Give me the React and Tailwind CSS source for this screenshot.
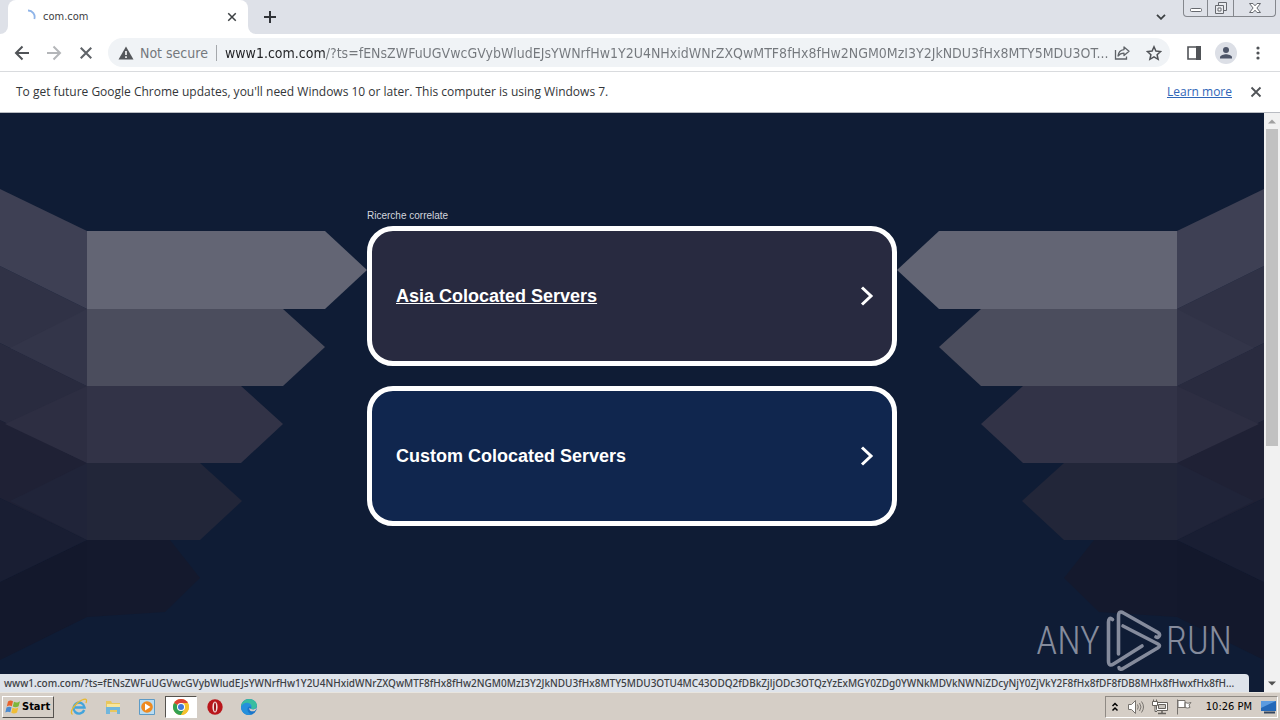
import React from "react";

const HOST = "www1.com.com";
const QUERY = "/?ts=fENsZWFuUGVwcGVybWludEJsYWNrfHw1Y2U4NHxidWNrZXQwMTF8fHx8fHw2NGM0MzI3Y2JkNDU3fHx8MTY5MDU3OT";
const QUERY_REST = "U4MC43ODQ2fDBkZjljODc3OTQzYzExMGY0ZDg0YWNkMDVkNWNiZDcyNjY0ZjVkY2F8fHx8fDF8fDB8MHx8fHwxfHx8fH";

function Cross({ className }) {
  return (
    <svg className={className} viewBox="0 0 12 12" fill="none" stroke="currentColor" strokeWidth="1.8" aria-hidden="true">
      <path d="M1.5 1.5 10.5 10.5M10.5 1.5 1.5 10.5" />
    </svg>
  );
}

function TabStrip() {
  return (
    <header className="flex h-[34px] items-end bg-[#dee1e8]">
      <div className="flex w-2 self-stretch items-end bg-white">
        <div className="h-full w-full rounded-br-lg bg-[#dee1e8]" />
      </div>
      <div className="flex h-full w-60 items-center rounded-t-lg bg-white pl-3 pr-2">
        <svg className="h-4 w-4" viewBox="0 0 16 16" fill="none" aria-hidden="true">
          <path d="M8 1.5A6.5 6.5 0 0 1 14.3 10" stroke="#8fb4e8" strokeWidth="1.8" />
        </svg>
        <span className="ml-[7px] flex-1 font-['DejaVu_Sans_Condensed',sans-serif] text-[11px] leading-4 text-[#3c4043]">com.com</span>
        <button type="button" aria-label="Close tab" className="flex h-4 w-4 items-center justify-center text-[#3c4043]">
          <Cross className="h-[10px] w-[10px]" />
        </button>
      </div>
      <div className="flex w-2 self-stretch bg-white">
        <div className="h-full w-full rounded-bl-lg bg-[#dee1e8]" />
      </div>
      <button type="button" aria-label="New tab" className="flex h-full w-7 items-center justify-center text-[#303338]">
        <svg className="h-3 w-3" viewBox="0 0 12 12" stroke="currentColor" strokeWidth="2" aria-hidden="true">
          <path d="M6 0v12M0 6h12" />
        </svg>
      </button>
      <div className="flex-1" />
      <button type="button" aria-label="Search tabs" className="mr-[14px] flex h-full w-4 items-center justify-center text-[#3c4043]">
        <svg className="h-[6px] w-[10px]" viewBox="0 0 10 6" fill="none" stroke="currentColor" strokeWidth="1.8" aria-hidden="true">
          <path d="m1 .8 4 4 4-4" />
        </svg>
      </button>
      <div className="mr-1 flex h-[17px] self-start rounded-b border border-t-0 border-[#84878d] text-[#66696f]">
        <button type="button" aria-label="Minimize" className="flex w-6 items-center justify-center border-r border-[#84878d]">
          <svg className="h-4 w-4" viewBox="0 0 16 16" fill="#fff" stroke="currentColor" aria-hidden="true">
            <rect x="2.5" y="8.5" width="11" height="3" rx="1" />
          </svg>
        </button>
        <button type="button" aria-label="Restore" className="flex w-[26px] items-center justify-center border-r border-[#84878d]">
          <svg className="h-4 w-4" viewBox="0 0 16 16" fill="#e8eaee" stroke="currentColor" aria-hidden="true">
            <path d="M5.5 2.5h8v8h-8z" />
            <path d="M2.500 5.500h8v8h-8z" />
            <path d="M5 8h3v3H5z" fill="#fff" />
          </svg>
        </button>
        <button type="button" aria-label="Close window" className="flex w-[41px] items-center justify-center">
          <svg className="h-4 w-4" viewBox="0 0 16 16" fill="#fff" stroke="currentColor" aria-hidden="true">
            <path d="M2.500 3.500h3.500l2 2.300 2-2.300h3.500l-3.600 4.500 3.600 4.500h-3.500l-2-2.300-2 2.300h-3.500l3.600-4.500z" />
          </svg>
        </button>
      </div>
    </header>
  );
}

function Toolbar() {
  const button = "flex h-8 w-8 shrink-0 items-center justify-center text-[#5f6368]";
  return (
    <nav className="flex h-[37px] items-center bg-white pl-[6px] pr-[6px]">
      <button type="button" aria-label="Back" className={button}>
        <svg className="h-4 w-4" viewBox="0 0 16 16" fill="none" stroke="#505357" strokeWidth="2" aria-hidden="true">
          <path d="M15 8H2.500M8.500 1.500 2 8l6.500 6.500" />
        </svg>
      </button>
      <button type="button" aria-label="Forward" disabled className={button}>
        <svg className="h-4 w-4" viewBox="0 0 16 16" fill="none" stroke="#b4b6b9" strokeWidth="2" aria-hidden="true">
          <path d="M1 8h12.500M7.500 1.500 14 8l-6.500 6.500" />
        </svg>
      </button>
      <button type="button" aria-label="Stop loading" className={button}>
        <Cross className="h-[14px] w-[14px]" />
      </button>
      <div className="ml-[6px] flex h-[29px] min-w-0 flex-1 items-center rounded-full bg-[#f0f3f6] pl-[10px] font-['DejaVu_Sans_Condensed','DejaVu_Sans',sans-serif]">
        <svg className="h-4 w-4 shrink-0" viewBox="0 0 16 16" aria-hidden="true">
          <path d="M8 1.500 15.500 14.500H.5z" fill="#55585c" />
          <path d="M8 6v4M8 11.300v1.700" stroke="#fff" strokeWidth="1.600" />
        </svg>
        <span className="ml-[6px] w-[68px] shrink-0 whitespace-nowrap text-[14px] leading-5 text-[#74787d]">Not secure</span>
        <span className="ml-2 h-4 w-px shrink-0 bg-[#a5a8ac]" />
        <input
          type="text"
          aria-label="Address and search bar"
          defaultValue={HOST + QUERY + "..."}
          className="ml-2 h-6 min-w-0 flex-1 bg-linear-to-r from-[#202124] from-[100px] to-[#74787d] to-[100px] bg-clip-text text-[14px] leading-5 text-transparent outline-none"
        />
        <button type="button" aria-label="Share this page" className="flex h-7 w-7 shrink-0 items-center justify-start pl-1 text-[#5f6368]">
          <svg className="h-4 w-4" viewBox="0 0 16 16" fill="none" stroke="currentColor" strokeWidth="1.300" aria-hidden="true">
            <path d="M1.500 5v9h11v-2.500" />
            <path d="M10 2l5 4.300-5 4.300V8.200C7.300 8.200 5.500 9 4 11c.4-3.700 2.500-6 6-6.400z" strokeLinejoin="round" />
          </svg>
        </button>
        <button type="button" aria-label="Bookmark this tab" className="flex h-7 w-8 shrink-0 items-center justify-center text-[#505357]">
          <svg className="h-4 w-4" viewBox="0 0 16 16" fill="none" stroke="currentColor" strokeWidth="1.500" aria-hidden="true">
            <path d="m8 1.800 1.900 4.300 4.700.5-3.500 3.100 1 4.600L8 11.900l-4.100 2.400 1-4.600L1.400 6.600l4.700-.5z" />
          </svg>
        </button>
      </div>
      <button type="button" aria-label="Side panel" className="ml-2 flex h-8 w-8 shrink-0 items-center justify-center">
        <svg className="h-[14px] w-[14px]" viewBox="0 0 14 14" aria-hidden="true">
          <path d="M1 1h12v12H1z" fill="#fff" stroke="#505357" strokeWidth="1.600" />
          <path d="M9 0h5v14H9z" fill="#505357" />
        </svg>
      </button>
      <button type="button" aria-label="Profile" className="flex h-8 w-8 shrink-0 items-center justify-center">
        <svg className="h-[22px] w-[22px]" viewBox="0 0 22 22" aria-hidden="true">
          <circle cx="11" cy="11" r="11" fill="#dcdfe6" />
          <circle cx="11" cy="8" r="3" fill="#4d5568" />
          <path d="M5 16.500v-1.200c0-2 4-3 6-3s6 1 6 3v1.200z" fill="#4d5568" />
        </svg>
      </button>
      <button type="button" aria-label="Menu" className="flex h-8 w-8 shrink-0 items-center justify-center">
        <svg className="h-4 w-4" viewBox="0 0 16 16" fill="#505357" aria-hidden="true">
          <circle cx="8" cy="3" r="1.600" />
          <circle cx="8" cy="8" r="1.600" />
          <circle cx="8" cy="13" r="1.600" />
        </svg>
      </button>
    </nav>
  );
}

function UpdateNotice() {
  return (
    <section className="flex h-[42px] items-center border-y border-t-[#d9dbde] border-b-[#b9bcc2] bg-white pl-4 pr-[18px] text-[12px] leading-4 text-[#333639]">
      <p className="flex-1">
        To get future Google Chrome updates, you'll need Windows 10 or later. This computer is using Windows 7.
      </p>
      <a href="#learn" className="text-[#2f66b8] underline">Learn more</a>
      <button type="button" aria-label="Dismiss" className="ml-[18px] flex h-3 w-3 items-center justify-center text-[#505357]">
        <Cross className="h-3 w-3" />
      </button>
    </section>
  );
}

function Ribbons({ className }) {
  return (
    <svg className={className} width="367" height="578" viewBox="0 113 367 578" aria-hidden="true">
      <path d="M0 582 87 540V617L0 660z" fill="#13182c" />
      <path d="M87 540H170L200 578 165 612 87 617z" fill="#14192d" />
      <path d="M0 498 87 540 0 582z" fill="#191e33" />
      <path d="M0 420 87 463V540L0 498z" fill="#1f2135" />
      <path d="M0 343 87 386V463L0 420z" fill="#292b3f" />
      <path d="M0 266 87 309V386L0 343z" fill="#303246" />
      <path d="M0 189 87 231V309L0 266z" fill="#3e4054" />
      <path d="M87 309V386L10 348z" fill="#333549" />
      <path d="M87 386V463L5 424z" fill="#2d2e42" />
      <path d="M87 463V540L10 501z" fill="#202439" />
      <path d="M87 463H200L242 501 200 540H87z" fill="#222639" />
      <path d="M87 386H241L283 424 241 463H87z" fill="#323347" />
      <path d="M87 309H283L325 347 283 386H87z" fill="#4b4d5d" />
      <path d="M87 231H325L367 270 325 309H87z" fill="#636574" />
    </svg>
  );
}

function ResultCard({ title, active }) {
  return (
    <a
      href="#result"
      className={
        "flex h-[140px] items-center justify-between rounded-[26px] border-[5px] border-white pl-6 pr-[18px] text-white " +
        (active ? "bg-[#282a40]" : "bg-[#10264e]")
      }
    >
      <span className={"text-[18px] font-bold leading-6 " + (active ? "underline" : "")}>{title}</span>
      <svg className="h-5 w-[14px]" viewBox="0 0 14 20" fill="none" stroke="#fff" strokeWidth="3" aria-hidden="true">
        <path d="m2 1.500 9 8.500L2 18.500" />
      </svg>
    </a>
  );
}

function Watermark() {
  const word = "font-['Roboto_Condensed','Roboto',sans-serif] text-[38px] font-light leading-[60px]";
  return (
    <div className="absolute bottom-5 right-8 flex items-center text-[#858b9c]">
      <span className={word}>ANY</span>
      <svg className="ml-[6px] mr-1 h-[62px] w-14" viewBox="0 0 56 62" fill="none" stroke="#858b9c" strokeWidth="3.600" strokeLinejoin="round" strokeLinecap="round" aria-hidden="true">
        <path d="M6.500 9.500C4 7 2.500 9 2.500 12V51c0 4 2 5 5 3L36 36" />
        <path d="M12.500 44V6c0-4 2-5 5-3L52 22.500c3 2 1 6-2 4.500" />
        <path d="M17 16 52 34c2 1.200 2 2.500 0 3.800L17 58.500c-2 1.500-4 .5-4-1" />
      </svg>
      <span className={word}>RUN</span>
    </div>
  );
}

function Scrollbar() {
  return (
    <div className="flex w-4 shrink-0 flex-col items-center bg-[#f1f1f1]" aria-hidden="true">
      <svg className="h-4 w-4 shrink-0" viewBox="0 0 16 16"><path d="M4 10.500 8 6.500l4 4z" fill="#a0a0a0" /></svg>
      <div className="min-h-0 w-full flex-1 px-[2px]">
        <div className="h-[58%] bg-[#c1c1c1]" />
      </div>
      <svg className="h-4 w-4 shrink-0" viewBox="0 0 16 16"><path d="M4 5.500 8 9.500l4-4z" fill="#505050" /></svg>
    </div>
  );
}

function PageView() {
  return (
    <div className="flex min-h-0 flex-1">
      <main className="relative min-w-0 flex-1 overflow-hidden bg-[#0f1c35] font-['Liberation_Sans',sans-serif]">
        <Ribbons className="absolute left-0 top-0" />
        <Ribbons className="absolute right-0 top-0 -scale-x-100" />
        <div className="relative mx-auto flex w-[530px] flex-col pt-[97px]">
          <h1 className="mb-1 text-[10px] leading-3 text-[#d3d6de]">Ricerche correlate</h1>
          <div className="flex flex-col gap-5">
            <ResultCard title="Asia Colocated Servers" active />
            <ResultCard title="Custom Colocated Servers" />
          </div>
        </div>
        <Watermark />
        <div className="absolute bottom-0 left-0 right-[15px] h-[18px] overflow-hidden whitespace-nowrap rounded-tr bg-[#dee3ea] pl-1 font-['Noto_Sans',sans-serif] text-[10px] font-medium leading-[18px] text-[#3c4043]">
          {HOST + QUERY + QUERY_REST + "..."}
        </div>
      </main>
      <Scrollbar />
    </div>
  );
}

function StartFlag() {
  return (
    <svg className="h-4 w-4" viewBox="0 0 16 16" aria-hidden="true">
      <path d="M3 2.500c2-1.500 3.500-1 5-.2L6.800 7.200c-1.600-.8-3-.9-5 .2z" fill="#e8622c" />
      <path d="M9 2.800c2 1 3.600 1 6-.5l-1.400 5c-2 1.300-4 1.200-5.800.3z" fill="#7db63c" />
      <path d="M1.500 8.500c2-1.200 3.500-1 5-.2l-1.200 5c-1.600-.8-3-1-5 .2z" fill="#4a8ad0" />
      <path d="M7.500 8.700c2 1 3.700 1 5.800-.3l-1.300 5c-2 1.300-4 1.200-5.700.3z" fill="#f0bd35" />
    </svg>
  );
}

function Taskbar() {
  const app = "flex h-[22px] w-8 items-center justify-center";
  return (
    <footer className="flex h-[28px] shrink-0 items-center border-t border-[#e8e5df] bg-[#d5cec6] pl-[2px] pr-[2px] font-['DejaVu_Sans_Condensed','DejaVu_Sans',sans-serif]">
      <button type="button" className="flex h-[22px] w-[52px] items-center gap-px border border-b-[#55524e] border-l-white border-r-[#55524e] border-t-white pl-[2px] text-[11px] font-bold leading-4 text-black">
        <StartFlag />
        Start
      </button>
      <div className="ml-[9px] flex flex-1 items-center gap-[2px]">
        <button type="button" aria-label="Internet Explorer" className={app}>
          <svg className="h-[18px] w-[18px]" viewBox="0 0 18 18" fill="none" aria-hidden="true">
            <path d="M14.200 12A5.500 5.500 0 1 1 14.500 9.500H5" stroke="#42a4dc" strokeWidth="2.400" />
            <path d="M2.500 16.500C-1 14 5 5 12 2c5-2 5 0 4 3" stroke="#e8b92e" strokeWidth="1.300" />
          </svg>
        </button>
        <button type="button" aria-label="Windows Explorer" className={app}>
          <svg className="h-4 w-4" viewBox="0 0 16 16" aria-hidden="true">
            <path d="M1 2h5l1 2h8v9H1z" fill="#e8c75e" />
            <path d="M2 5h13v5H2z" fill="#f8e69b" />
            <path d="M1 8h14v7h-3v-4H5v4H1z" fill="#70b6dc" />
          </svg>
        </button>
        <button type="button" aria-label="Media Player" className={app}>
          <svg className="h-4 w-4" viewBox="0 0 16 16" aria-hidden="true">
            <path d="M.5.5h15v15H.5z" fill="#b9dcf2" stroke="#5d9bc6" />
            <circle cx="8" cy="8" r="5.800" fill="#ee8a20" />
            <path d="m6 4.500 5.500 3.500L6 11.500z" fill="#fff" />
          </svg>
        </button>
        <button type="button" aria-label="Google Chrome" className="flex h-[22px] w-8 items-center justify-center border border-b-white border-l-[#55524e] border-r-white border-t-[#55524e] bg-white">
          <svg className="h-4 w-4" viewBox="0 0 16 16" aria-hidden="true">
            <circle cx="8" cy="8" r="8" fill="#f5c12e" />
            <path d="M8 8 1.070 4A8 8 0 0 1 14.930 4z" fill="#dc4335" />
            <path d="M8 8 1.070 4A8 8 0 0 0 8 16l3.460-6z" fill="#33a152" />
            <path d="M8 4h6.930A8 8 0 0 1 8 16l3.460-6z" fill="#f5c12e" />
            <circle cx="8" cy="8" r="4" fill="#fff" />
            <circle cx="8" cy="8" r="3" fill="#4079da" />
          </svg>
        </button>
        <button type="button" aria-label="Opera" className={app}>
          <svg className="h-4 w-4" viewBox="0 0 16 16" aria-hidden="true">
            <circle cx="8" cy="8" r="7.700" fill="#b9161b" />
            <ellipse cx="8" cy="8" rx="2.600" ry="5.500" fill="#f3dedd" />
            <ellipse cx="8" cy="8" rx="1" ry="4.500" fill="#9a1015" />
          </svg>
        </button>
        <button type="button" aria-label="Microsoft Edge" className={app}>
          <svg className="h-4 w-4" viewBox="0 0 16 16" aria-hidden="true">
            <circle cx="8" cy="8" r="8" fill="#1b75c9" />
            <path d="M0 8C0 3 4 0 8 0c5 0 8 3.500 8 6.500 0 3-3 4-6 3.500C11 7 9 5 6 5 3 5 1 6.500 0 8z" fill="#39bda0" />
            <path d="M0 8c1-3 4-4.500 6.500-4.300C9 4 11 6 10.500 8.500 9 6.500 6 8 6.500 11c.5 2.500 2.500 4.500 5 4C5 18 0 13 0 8z" fill="#2590dc" />
            <path d="M10 10c3 1 5 0 6-2-.5 3-2 4-4 4.300-2 .2-4-1-3.700-3.300z" fill="#d5cec6" />
          </svg>
        </button>
      </div>
      <div className="flex h-[22px] items-center border border-b-white border-l-[#8f8a84] border-r-white border-t-[#8f8a84] pl-[5px] text-black">
        <button type="button" aria-label="Show hidden icons" className="flex h-4 w-2 items-center justify-center">
          <svg className="h-[10px] w-2" viewBox="0 0 8 10" fill="none" stroke="#000" strokeWidth="1.500" aria-hidden="true">
            <path d="m1.500 4 2.500-2.500L6.500 4M1.500 8.500 4 6l2.500 2.500" />
          </svg>
        </button>
        <svg className="ml-[9px] h-4 w-4" viewBox="0 0 16 16" fill="#fff" stroke="#77736e" role="img" aria-label="Volume">
          <path d="M.5 5.500h3l4-4v13l-4-4h-3z" />
          <path d="M9.500 5.500q1.500 2.500 0 5M11.500 4q3 4 0 8M13.500 2.500q4 5.500 0 11" fill="none" />
        </svg>
        <svg className="ml-2 h-4 w-4" viewBox="0 0 16 16" fill="#fff" stroke="#66625d" role="img" aria-label="Network">
          <path d="M4.500 3.500h11v8h-11z" />
          <path d="M6.500 5.500h7v4h-7z" fill="#c9c5bf" />
          <path d="M6 14.500h8M10 12v2" strokeWidth="1.500" />
          <path d="M.5 2.500h5v4h-5zM1.500.5v2M4.500.5v2M3 7v5.500h2" />
        </svg>
        <svg className="ml-2 h-4 w-4" viewBox="0 0 16 16" fill="#fff" stroke="#77736e" role="img" aria-label="Action center">
          <path d="M1.500.5v15M2 1.500h7v7H2zM9 3.500q3 1.500 6 0l-2 2.500 1 2.500q-2.500 1-5 0z" />
        </svg>
        <time className="ml-[14px] text-[11px] leading-4">10:26 PM</time>
        <svg className="ml-[9px] h-4 w-4" viewBox="0 0 16 16" role="img" aria-label="Show desktop">
          <path d="M0 2h15v10H0z" fill="#2468b8" />
          <path d="M0 2h15L0 9z" fill="#5b9be0" />
          <path d="M3 12.500h11v2H3z" fill="#34465f" />
        </svg>
      </div>
    </footer>
  );
}

export default function App() {
  return (
    <div className="flex h-screen flex-col overflow-hidden font-['Open_Sans','Noto_Sans',sans-serif]">
      <TabStrip />
      <Toolbar />
      <UpdateNotice />
      <PageView />
      <Taskbar />
    </div>
  );
}
